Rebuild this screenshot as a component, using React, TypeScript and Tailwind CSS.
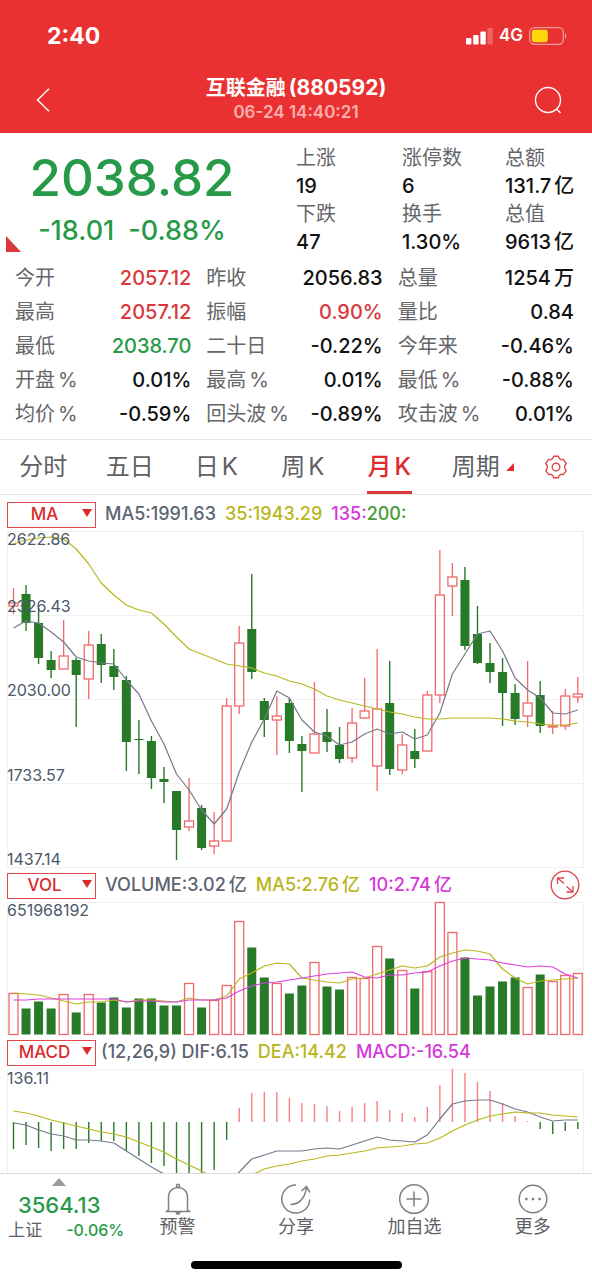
import React, { useState } from 'react';
import clsx from 'clsx';

type Candle = {
  up: boolean;
  high: number;
  top: number;
  bottom: number;
  low: number;
  vol: number;
  macd: number;
};

// [up, high, top, bottom, low, volume top, macd end], y values inside their own panel
const rows: [number, number, number, number, number, number, number][] = [
  [1, 57, 72, 75, 83, 91, 80],
  [0, 54, 63, 92, 100, 106, 76],
  [0, 77, 92, 127, 133, 99, 79],
  [0, 120, 129, 139, 147, 106, 82],
  [1, 89, 125, 138, 138, 92, 80],
  [0, 127, 129, 144, 196, 110, 80],
  [1, 100, 114, 148, 168, 92, 74],
  [0, 103, 113, 134, 152, 100, 72],
  [0, 118, 135, 146, 159, 95, 72],
  [0, 145, 149, 211, 240, 105, 82],
  [0, 189, 208, 209, 243, 96, 87],
  [0, 205, 210, 247, 258, 96, 94],
  [0, 236, 248, 251, 272, 103, 97],
  [0, 260, 260, 299, 329, 103, 112],
  [1, 247, 290, 296, 300, 81, 118],
  [0, 274, 277, 317, 319, 105, 112],
  [1, 281, 310, 315, 323, 98, 101],
  [1, 167, 175, 310, 310, 83, 71],
  [1, 95, 112, 175, 183, 19, 39],
  [0, 43, 98, 141, 148, 45, 24],
  [0, 167, 170, 189, 206, 75, 23],
  [1, 165, 185, 189, 224, 81, 23],
  [0, 167, 172, 210, 222, 91, 29],
  [0, 205, 213, 220, 261, 83, 34],
  [1, 151, 203, 222, 222, 60, 35],
  [0, 178, 201, 211, 221, 84, 37],
  [0, 196, 214, 228, 232, 87, 42],
  [1, 177, 192, 227, 232, 75, 38],
  [1, 147, 180, 187, 188, 76, 34],
  [1, 118, 178, 235, 260, 44, 32],
  [0, 130, 172, 238, 244, 56, 41],
  [1, 203, 214, 239, 243, 68, 44],
  [0, 198, 220, 228, 237, 86, 48],
  [1, 160, 164, 220, 220, 69, 38],
  [1, 19, 64, 164, 172, 0, 16],
  [1, 32, 46, 55, 85, 30, 0],
  [0, 36, 49, 115, 119, 55, 4],
  [0, 75, 103, 132, 133, 93, 13],
  [0, 112, 132, 141, 152, 84, 22],
  [0, 127, 141, 162, 195, 79, 34],
  [0, 153, 162, 188, 194, 75, 47],
  [1, 130, 172, 185, 196, 85, 52],
  [0, 150, 164, 195, 202, 72, 60],
  [1, 180, 195, 196, 203, 79, 65],
  [1, 158, 165, 195, 199, 73, 62],
  [1, 146, 163, 166, 172, 71, 60],
];

const candles: Candle[] = rows.map(([up, high, top, bottom, low, vol, macd]) => ({
  up: up === 1, high, top, bottom, low, vol, macd,
}));

const ma5 = [97, 90, 92, 101, 111, 126, 130, 132, 133, 149, 163, 190, 213, 243, 259, 279, 293, 278, 241, 211, 188, 160, 167, 189, 201, 205, 214, 211, 203, 198, 203, 201, 208, 204, 182, 143, 123, 103, 100, 120, 147, 159, 167, 182, 183, 179];
const ma35 = [13, 9, 7, 6, 8, 18, 33, 52, 64, 74, 79, 82, 93, 106, 118, 123, 128, 133, 135, 137, 142, 145, 150, 153, 158, 165, 169, 172, 175, 178, 181, 183, 186, 188, 188, 187, 187, 187, 187, 188, 190, 191, 193, 194, 194, 192];
const vol5 = [91, 92, 93, 96, 99, 102, 100, 100, 98, 100, 98, 98, 99, 100, 96, 98, 98, 94, 77, 71, 64, 61, 62, 76, 78, 80, 81, 77, 76, 72, 68, 64, 66, 64, 55, 51, 48, 49, 52, 67, 76, 82, 79, 78, 77, 76];
const vol10 = [98, 98, 97, 97, 97, 97, 97, 97, 97, 100, 99, 99, 100, 100, 98, 98, 98, 96, 89, 84, 81, 80, 78, 76, 74, 72, 71, 70, 75, 76, 73, 73, 71, 70, 64, 59, 56, 57, 58, 61, 63, 65, 64, 65, 72, 76];
const dif = [54, 56, 61, 65, 67, 71, 71, 72, 74, 82, 90, 98, 105, 114, 122, 128, 126, 118, 103, 90, 86, 82, 82, 82, 80, 79, 80, 76, 72, 68, 71, 72, 73, 66, 50, 35, 32, 31, 31, 35, 40, 43, 48, 52, 51, 51];
const dea = [42, 44, 47, 51, 54, 57, 60, 63, 65, 68, 73, 78, 83, 90, 96, 102, 109, 115, 112, 106, 100, 97, 95, 92, 90, 87, 86, 84, 82, 79, 78, 77, 75, 74, 69, 62, 56, 51, 47, 45, 43, 44, 44, 46, 47, 48];

const RED = '#f0686b';
const GREEN = '#277a28';
const SLATE = '#76788a';
const OLIVE = '#b9b61c';
const PINK = '#dc3fe0';

const xAt = (i: number) => 6.5 + i * 12.54;

function Line({ data, color }: { data: number[]; color: string }) {
  return (
    <polyline
      points={data.map((y, i) => `${xAt(i)},${y}`).join(' ')}
      fill="none"
      stroke={color}
      strokeWidth="1.2"
      strokeLinejoin="round"
    />
  );
}

function Panel({ height, label, grid, children }: {
  height: number;
  label: string;
  grid: number[];
  children: React.ReactNode;
}) {
  return (
    <svg viewBox={`0 0 577 ${height}`} className="block w-full overflow-visible" role="img" aria-label={label}>
      <path d={`M.5 0V${height}M576.5 0V${height}`} stroke="#f1f1f4" />
      {grid.map((y) => (
        <path key={y} d={`M0 ${y + 0.5}H577`} stroke="#f1f1f4" />
      ))}
      {children}
    </svg>
  );
}

function AxisLabel({ y, children }: { y: number; children: string }) {
  return (
    <text x="0" y={y} className="text-[16px]" fill="#4b5869">
      {children}
    </text>
  );
}

function PriceChart() {
  return (
    <Panel height={337} label="月K" grid={[0, 84, 168, 252, 336]}>
      {candles.map((c, i) => {
        const x = xAt(i);
        const h = Math.max(c.bottom - c.top, 1);
        return c.up ? (
          <g key={i} stroke={RED} fill="none" strokeWidth="1.3">
            <path d={`M${x} ${c.high}V${c.top}M${x} ${c.bottom}V${c.low}`} />
            <rect x={x - 4.5} y={c.top} width="9" height={h} />
          </g>
        ) : (
          <g key={i} fill={GREEN}>
            <rect x={x - 0.7} y={c.high} width="1.4" height={c.low - c.high} />
            <rect x={x - 4.5} y={c.top} width="9" height={h} />
          </g>
        );
      })}
      <Line data={ma5} color={SLATE} />
      <Line data={ma35} color={OLIVE} />
      <AxisLabel y={14}>2622.86</AxisLabel>
      <AxisLabel y={81}>2326.43</AxisLabel>
      <AxisLabel y={165}>2030.00</AxisLabel>
      <AxisLabel y={250}>1733.57</AxisLabel>
      <AxisLabel y={334}>1437.14</AxisLabel>
    </Panel>
  );
}

function VolumeChart() {
  return (
    <Panel height={133} label="VOL" grid={[0]}>
      {candles.map((c, i) => (
        <rect
          key={i}
          x={xAt(i) - 4.5}
          y={c.vol + 0.5}
          width="9"
          height={132 - c.vol}
          fill={c.up ? 'none' : GREEN}
          stroke={c.up ? RED : 'none'}
          strokeWidth="1.3"
        />
      ))}
      <Line data={vol5} color={OLIVE} />
      <Line data={vol10} color={PINK} />
      <AxisLabel y={14}>651968192</AxisLabel>
    </Panel>
  );
}

function MacdChart() {
  return (
    <Panel height={134} label="MACD" grid={[0]}>
      {candles.map((c, i) => (
        <path
          key={i}
          d={`M${xAt(i)} 53V${c.macd}`}
          stroke={c.macd > 53 ? GREEN : '#f58084'}
          strokeWidth="1.4"
        />
      ))}
      <Line data={dif} color={SLATE} />
      <Line data={dea} color={OLIVE} />
      <AxisLabel y={15}>136.11</AxisLabel>
    </Panel>
  );
}

function IndicatorSelect({ options, label }: { options: string[]; label: string }) {
  return (
    <div className="relative h-[26px] w-[89px] shrink-0">
      <select
        aria-label={label}
        className="h-full w-full appearance-none border border-[#e0484a] bg-white pr-3.5 text-[17px] leading-none font-medium text-[#d9292d] [text-align-last:center]"
      >
        {options.map((o) => (
          <option key={o}>{o}</option>
        ))}
      </select>
      <svg viewBox="0 0 10 8" className="pointer-events-none absolute top-2 right-1 w-[10px]">
        <path d="M0 0H10L5 8Z" fill="#d9292d" />
      </svg>
    </div>
  );
}

// keeps a thin gap between Chinese text and a latin unit, and the other way round
function Unit({ children }: { children: string }) {
  return <span className="ml-[3px]">{children}</span>;
}

const breadth = [
  { label: '上涨', value: '19' },
  { label: '涨停数', value: '6' },
  { label: '总额', value: '131.7', unit: '亿' },
  { label: '下跌', value: '47' },
  { label: '换手', value: '1.30%' },
  { label: '总值', value: '9613', unit: '亿' },
];

const quotes: { label: string; pct?: boolean; value: string; unit?: string; color?: string }[] = [
  { label: '今开', value: '2057.12', color: 'text-[#d9383c]' },
  { label: '昨收', value: '2056.83' },
  { label: '总量', value: '1254', unit: '万' },
  { label: '最高', value: '2057.12', color: 'text-[#d9383c]' },
  { label: '振幅', value: '0.90%', color: 'text-[#d9383c]' },
  { label: '量比', value: '0.84' },
  { label: '最低', value: '2038.70', color: 'text-[#279a48]' },
  { label: '二十日', value: '-0.22%' },
  { label: '今年来', value: '-0.46%' },
  { label: '开盘', pct: true, value: '0.01%' },
  { label: '最高', pct: true, value: '0.01%' },
  { label: '最低', pct: true, value: '-0.88%' },
  { label: '均价', pct: true, value: '-0.59%' },
  { label: '回头波', pct: true, value: '-0.89%' },
  { label: '攻击波', pct: true, value: '0.01%' },
];

const tabs = [
  { text: '分时' },
  { text: '五日' },
  { text: '日', k: true },
  { text: '周', k: true },
  { text: '月', k: true },
  { text: '周期', more: true },
];

function Header() {
  return (
    <header className="shrink-0 bg-[#e93131] text-white">
      <div className="flex h-[66px] items-center justify-between pt-[6px] pr-[25px] pl-[47px]">
        <span className="text-[23px] font-bold">2:40</span>
        <div className="flex items-center gap-[6px]">
          <svg viewBox="0 0 27 18" className="w-[27px]" fill="#fff">
            <rect x="0" y="11" width="5.4" height="6.5" rx="1.2" />
            <rect x="7.2" y="8" width="5.4" height="9.5" rx="1.2" />
            <rect x="14.4" y="4.5" width="5.4" height="13" rx="1.2" />
            <rect x="21.4" y="1" width="5.4" height="16.5" rx="1.2" opacity=".25" />
          </svg>
          <span className="text-[17px] font-semibold">4G</span>
          <svg viewBox="0 0 38 18" className="w-[38px]">
            <rect x=".7" y=".7" width="33.6" height="16.6" rx="4.5" fill="none" stroke="#f69a9a" strokeWidth="1.3" />
            <rect x="2.8" y="2.8" width="16" height="12.4" rx="2.4" fill="#fdd70c" />
            <path d="M36 6v6c1.800-.8 1.800-5.200 0-6Z" fill="#f69a9a" />
          </svg>
        </div>
      </div>
      <div className="flex h-[67px] items-center justify-between px-[30px]">
        <button aria-label="返回" className="w-8 pl-[6px]">
          <svg viewBox="0 0 14 24" className="w-[14px]" fill="none" stroke="#fff" strokeWidth="1.4">
            <path d="M13 .7 1.500 12 13 23.300" />
          </svg>
        </button>
        <div className="text-center">
          <h1 className="text-[21px] leading-6 font-bold">
            <span className="text-[20px]">互联金融</span>
            <Unit>(880592)</Unit>
          </h1>
          <p className="text-[17px] leading-6 font-semibold text-[#fab0ae]">06-24 14:40:21</p>
        </div>
        <button aria-label="搜索" className="flex w-8 justify-end">
          <svg viewBox="0 0 28 28" className="w-7" fill="none" stroke="#fff" strokeWidth="1.4">
            <circle cx="14" cy="14" r="12.500" />
            <path d="m22.500 23 4 4" />
          </svg>
        </button>
      </div>
    </header>
  );
}

function Summary() {
  return (
    <section className="flex pt-[11px]">
      <div className="relative w-1/2 shrink-0 text-[#279a48]">
        <div className="pr-8 text-center">
          <p className="pt-1 text-[51px] leading-[60px] font-medium">2038.82</p>
          <p className="flex justify-center gap-[14px] pt-[5px] text-[27px] leading-9 font-medium">
            <span>-18.01</span>
            <span>-0.88%</span>
          </p>
        </div>
        <svg viewBox="0 0 15 16" className="absolute bottom-1 left-[6px] w-[15px]">
          <path d="M0 0 15 16H0Z" fill="#d9383c" />
        </svg>
      </div>
      <dl className="grid flex-1 grid-cols-[106px_103px_1fr] whitespace-nowrap">
        {breadth.map((b) => (
          <div key={b.label}>
            <dt className="text-[20px] leading-7 text-[#66666a]">{b.label}</dt>
            <dd className="text-[20px] leading-7 font-medium">
              {b.value}
              {b.unit && <Unit>{b.unit}</Unit>}
            </dd>
          </div>
        ))}
      </dl>
    </section>
  );
}

function Quotes() {
  return (
    <dl className="grid grid-cols-3 gap-x-[15px] border-b border-[#e6e6e8] pt-[5px] pr-[18px] pb-2 pl-[15px] whitespace-nowrap">
      {quotes.map((q, i) => (
        <div key={i} className="flex h-[34px] items-center justify-between">
          <dt className="text-[20px] text-[#66666a]">
            {q.label}
            {q.pct && <Unit>%</Unit>}
          </dt>
          <dd className={clsx('text-[20px] font-medium', q.color)}>
            {q.value}
            {q.unit && <Unit>{q.unit}</Unit>}
          </dd>
        </div>
      ))}
    </dl>
  );
}

function Tabs() {
  const [active, setActive] = useState(4);
  return (
    <nav className="grid h-[55px] grid-cols-[repeat(6,1fr)_73px] border-b border-[#e6e6e8]">
      {tabs.map((t, i) => (
        <button key={t.text + i} onClick={() => setActive(i)} className="flex justify-center">
          <span
            className={clsx(
              'flex h-full items-center border-b-[3px] px-px pt-[3px] text-[24px]',
              i === active ? 'border-[#d9383c] font-medium text-[#e0292d]' : 'border-transparent text-[#606064]',
            )}
          >
            {t.text}
            {t.k && <Unit>K</Unit>}
            {t.more && (
              <svg viewBox="0 0 8 8" className="-mr-[14px] ml-[6px] w-2">
                <path d="M8 0V8H0Z" fill="#e0292d" />
              </svg>
            )}
          </span>
        </button>
      ))}
      <button aria-label="设置" className="flex items-center justify-center">
        <svg viewBox="0 0 24 24" className="w-6" fill="none" stroke="#e0484a" strokeWidth="1.400" strokeLinejoin="round">
          <path d="M9.600 1.200h4.800c.3 2.600 2.300 4.200 5 3.200l2.900 4.200c-2.300 1.900-2.300 4.900 0 6.800l-2.900 4.200c-2.700-1-4.700.6-5 3.200H9.600c-.3-2.600-2.300-4.200-5-3.200l-2.900-4.200c2.300-1.900 2.300-4.900 0-6.800l2.900-4.200c2.700 1 4.700-.6 5-3.200Z" />
          <circle cx="12" cy="12" r="3.800" />
        </svg>
      </button>
    </nav>
  );
}

function IndicatorBar({ children }: { children: React.ReactNode }) {
  return (
    <div className="flex items-center gap-[9px] py-1 text-[18px] leading-[26px] font-medium whitespace-nowrap text-[#5d6472]">
      {children}
    </div>
  );
}

function Footer() {
  const icon = 'h-8 w-8';
  return (
    <footer className="shrink-0 border-t border-[#dcdcde] bg-white">
      <div className="grid h-[72px] grid-cols-5 text-[18px] leading-6 text-[#606064]">
        <button className="flex flex-col items-center pt-1">
          <svg viewBox="0 0 14 8" className="w-[14px]">
            <path d="M7 0 14 8H0Z" fill="#9a9a9c" />
          </svg>
          <span className="pt-1 text-[22px] leading-[30px] font-medium text-[#279a48]">3564.13</span>
          <span className="flex items-center gap-6 pl-[14px] text-[17px] leading-5 whitespace-nowrap">
            上证 <span className="text-[16px] font-medium text-[#279a48]">-0.06%</span>
          </span>
        </button>
        <button className="flex flex-col items-center pt-[9px]">
          <svg viewBox="0 0 32 32" className={icon} fill="none" stroke="#808083" strokeWidth="1.5" strokeLinejoin="round">
            <circle cx="16" cy="2.800" r="1.600" />
            <path d="M6.500 27V14.500C6.500 8 11 4.500 16 4.500S25.500 8 25.500 14.500V27l2.300 1.600H4.200L6.500 27Z" />
            <path d="M14 29.200h4l-1 1.800h-2Z" fill="#808083" />
          </svg>
          预警
        </button>
        <button className="flex flex-col items-center pt-[9px]">
          <svg viewBox="0 0 32 32" className={icon} fill="none" stroke="#808083" strokeWidth="1.500">
            <path d="M16 2A14 14 0 1 0 29.800 16.500" />
            <path d="M10.500 21.500C19 21.500 25.500 15 26.300 4M21.500 8 26.400 3.500 30 9.500" />
          </svg>
          分享
        </button>
        <button className="flex flex-col items-center pt-[9px]">
          <svg viewBox="0 0 32 32" className={icon} fill="none" stroke="#808083" strokeWidth="1.5">
            <circle cx="16" cy="16" r="14.300" />
            <path d="M16 8.500v15M8.500 16h15" />
          </svg>
          加自选
        </button>
        <button className="flex flex-col items-center pt-[9px]">
          <svg viewBox="0 0 32 32" className={icon} fill="none" stroke="#808083" strokeWidth="1.5">
            <circle cx="16" cy="16" r="13.800" />
            <path d="M8.200 16h2.400M14.800 16h2.400M21.400 16h2.400" strokeWidth="2.400" />
          </svg>
          更多
        </button>
      </div>
      <div className="flex h-[34px] justify-center pt-[15px]">
        <div className="h-2 w-[211px] rounded-full bg-black" />
      </div>
    </footer>
  );
}

export default function App() {
  return (
    <div className="flex h-screen flex-col overflow-hidden bg-white font-[Inter,'Noto_Sans_CJK_SC',sans-serif] text-[#111] [font-optical-sizing:none]">
      <Header />
      <main className="min-h-0 flex-1 overflow-hidden">
        <Summary />
        <Quotes />
        <Tabs />
        <div className="pt-[2px] pr-2 pl-[7px]">
          <IndicatorBar>
            <IndicatorSelect label="主图指标" options={['MA', 'BOLL']} />
            <span>MA5:1991.63</span>
            <span className="text-[#b9b61c]">35:1943.29</span>
            <span className="text-[#d438da]">
              135:<span className="text-[#479b35]">200:</span>
            </span>
          </IndicatorBar>
          <PriceChart />
          <IndicatorBar>
            <IndicatorSelect label="成交量指标" options={['VOL']} />
            <span>VOLUME:3.02<Unit>亿</Unit></span>
            <span className="text-[#b9b61c]">MA5:2.76<Unit>亿</Unit></span>
            <span className="text-[#d438da]">10:2.74<Unit>亿</Unit></span>
            <button aria-label="全屏" className="-my-1 mr-1 ml-auto">
              <svg viewBox="0 0 30 30" className="w-[30px]" fill="none" stroke="#d8484c" strokeWidth="1.300">
                <circle cx="15" cy="15" r="13.800" />
                <path d="M7.500 14V8h6.500M7.500 8l6.500 5.500M16.500 16.500l6.500 5.500M23 16v6h-6.500" />
              </svg>
            </button>
          </IndicatorBar>
          <VolumeChart />
          <IndicatorBar>
            <IndicatorSelect label="副图指标" options={['MACD', 'KDJ']} />
            <span className="-ml-1">(12,26,9) DIF:6.15</span>
            <span className="text-[#b9b61c]">DEA:14.42</span>
            <span className="text-[#d438da]">MACD:-16.54</span>
          </IndicatorBar>
          <MacdChart />
        </div>
      </main>
      <Footer />
    </div>
  );
}
